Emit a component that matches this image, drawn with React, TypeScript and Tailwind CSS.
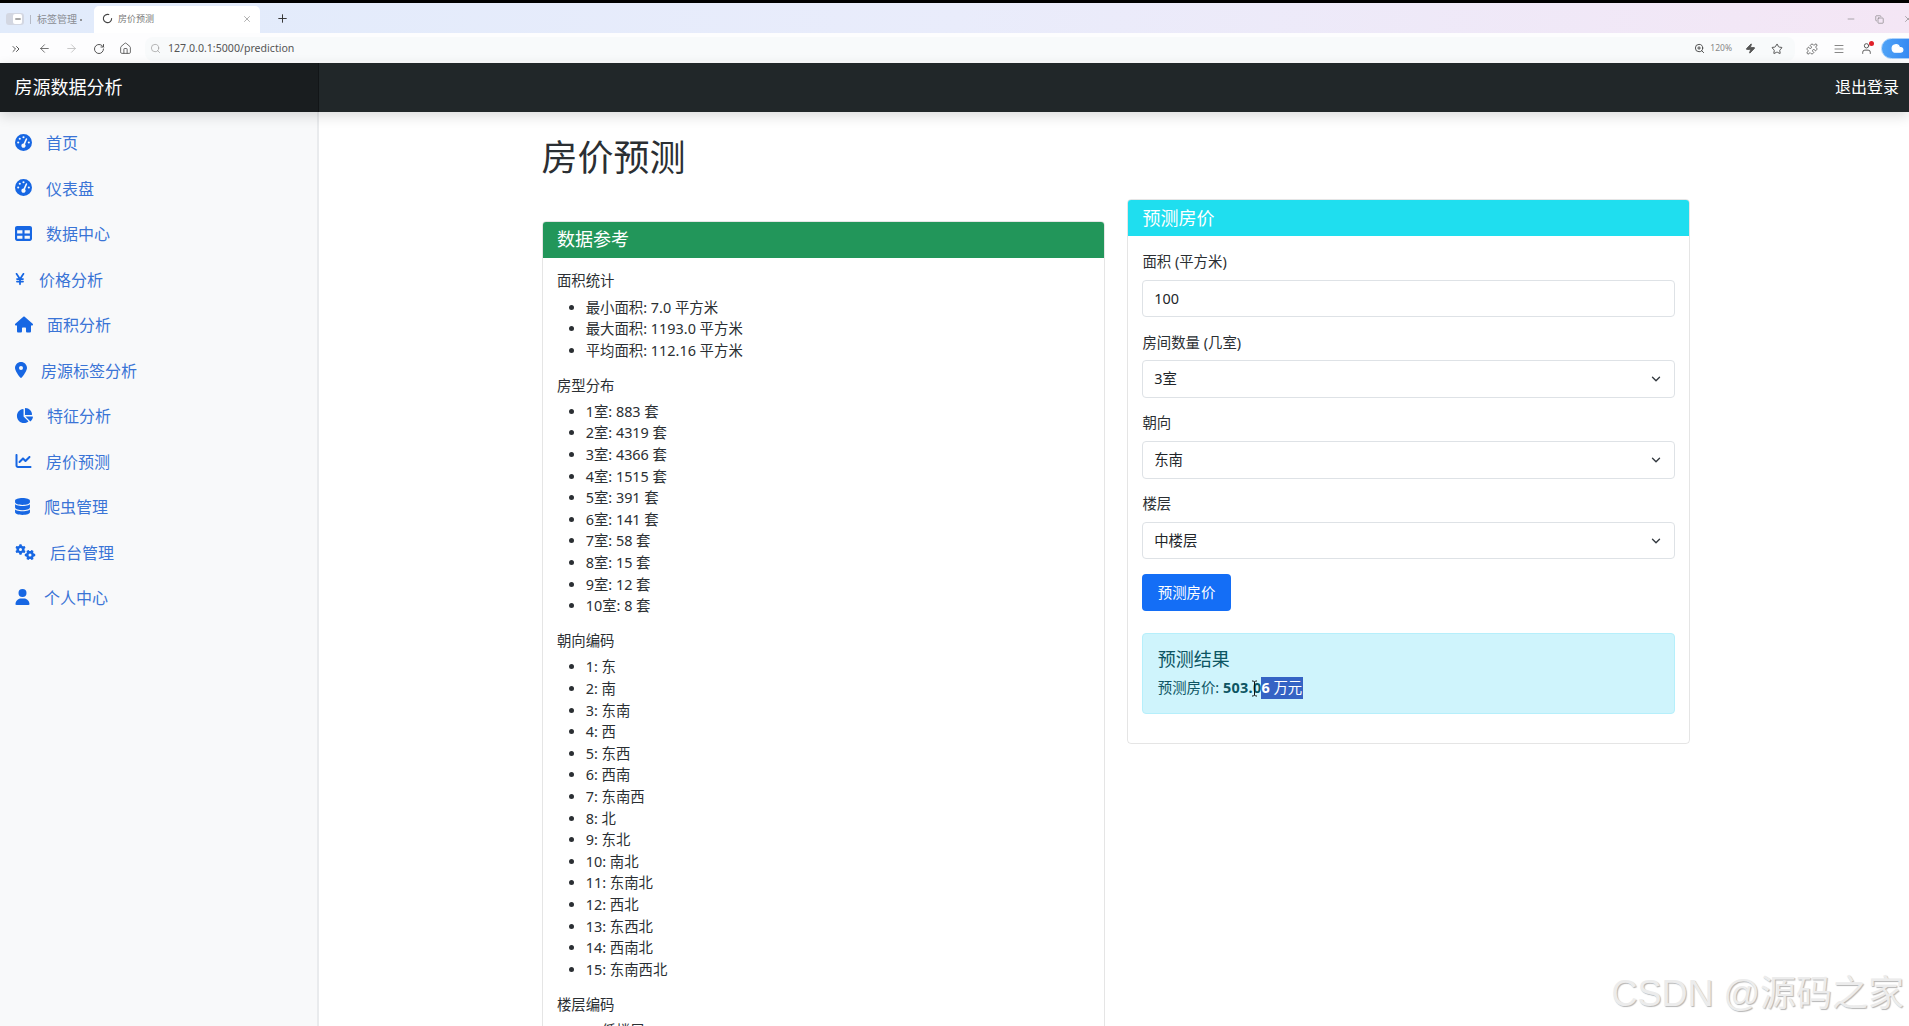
import type { ReactNode } from "react";
import {
  ArrowLeft,
  ArrowRight,
  ChevronDown,
  ChevronsRight,
  Cloud,
  Copy,
  Home,
  LoaderCircle,
  Menu,
  Minus,
  Plus,
  Puzzle,
  RotateCw,
  Search,
  Star,
  User,
  X,
  Zap,
  ZoomIn,
} from "lucide-react";
import {
  FaChartLine,
  FaChartPie,
  FaDatabase,
  FaGaugeHigh,
  FaGears,
  FaHouse,
  FaLocationDot,
  FaTable,
  FaUser,
  FaYenSign,
} from "react-icons/fa6";

const NAV_ITEMS = [
  { label: "首页", icon: <FaGaugeHigh className="h-[17px] w-[17px]" /> },
  { label: "仪表盘", icon: <FaGaugeHigh className="h-[17px] w-[17px]" /> },
  { label: "数据中心", icon: <FaTable className="h-[17px] w-[17px]" /> },
  { label: "价格分析", icon: <FaYenSign className="h-[14px] w-[10px]" /> },
  { label: "面积分析", icon: <FaHouse className="h-[17px] w-[18px]" /> },
  { label: "房源标签分析", icon: <FaLocationDot className="h-4 w-3" /> },
  { label: "特征分析", icon: <FaChartPie className="ml-px h-[17px] w-[17px]" /> },
  { label: "房价预测", icon: <FaChartLine className="h-4 w-[17px]" /> },
  { label: "爬虫管理", icon: <FaDatabase className="h-[17px] w-[15px]" /> },
  { label: "后台管理", icon: <FaGears className="h-4 w-[21px]" /> },
  { label: "个人中心", icon: <FaUser className="h-4 w-[15px]" /> },
];

const REFERENCE_DATA = [
  {
    title: "面积统计",
    items: ["最小面积: 7.0 平方米", "最大面积: 1193.0 平方米", "平均面积: 112.16 平方米"],
  },
  {
    title: "房型分布",
    items: [
      "1室: 883 套",
      "2室: 4319 套",
      "3室: 4366 套",
      "4室: 1515 套",
      "5室: 391 套",
      "6室: 141 套",
      "7室: 58 套",
      "8室: 15 套",
      "9室: 12 套",
      "10室: 8 套",
    ],
  },
  {
    title: "朝向编码",
    items: [
      "1: 东",
      "2: 南",
      "3: 东南",
      "4: 西",
      "5: 东西",
      "6: 西南",
      "7: 东南西",
      "8: 北",
      "9: 东北",
      "10: 南北",
      "11: 东南北",
      "12: 西北",
      "13: 东西北",
      "14: 西南北",
      "15: 东南西北",
    ],
  },
  {
    title: "楼层编码",
    items: ["1: 低楼层", "2: 中楼层", "3: 高楼层"],
  },
];

function Field({ label, children }: { label: string; children: ReactNode }) {
  return (
    <div className="mb-[14.4px]">
      <label className="mb-[7.2px] block leading-[21.6px]">{label}</label>
      {children}
    </div>
  );
}

function SelectField({ label, value, options }: { label: string; value: string; options: string[] }) {
  return (
    <Field label={label}>
      <div className="relative">
        <select
          defaultValue={value}
          className="block h-[37.6px] w-full appearance-none rounded-[4px] border border-[#dee2e6] bg-white px-[10.8px] text-[14.4px] text-[#212529]"
        >
          {options.map((o) => (
            <option key={o}>{o}</option>
          ))}
        </select>
        <ChevronDown
          className="pointer-events-none absolute top-[12px] right-[12px] h-[14px] w-[14px] text-[#343a40]"
          strokeWidth={2.4}
        />
      </div>
    </Field>
  );
}

function BrowserChrome() {
  return (
    <div className="shrink-0">
      <div className="h-[3px] bg-black" />
      <div className="flex h-[30px] items-end bg-gradient-to-r from-[#e1ebfb] via-[#e9ecfb] to-[#f4e6f5] text-[#666]">
        <div className="mb-[8px] ml-[6px] flex h-[12px] w-[18px] shrink-0 items-center justify-end rounded-[3px] bg-[#d3d7e2] pr-[2px]">
          <div className="flex h-[10px] w-[9px] items-center justify-center rounded-[2px] bg-white">
            <Minus className="h-2 w-2 text-[#555]" strokeWidth={3} />
          </div>
        </div>
        <div className="mb-[9px] ml-[6px] h-[9px] w-px shrink-0 bg-[#b5bac6]" />
        <span className="mb-[7px] ml-[6px] w-[40px] shrink-0 text-[10px] leading-[14px] text-[#8a8d93]">标签管理</span>
        <span className="mb-[12px] ml-[3px] h-[2px] w-[2px] shrink-0 rounded-full bg-[#777]" />
        <div className="ml-[12px] flex h-[27px] w-[166px] shrink-0 items-center rounded-t-[5px] bg-white pr-[8px] pb-[2px] pl-[8px]">
          <LoaderCircle className="h-[11px] w-[11px] text-[#444]" strokeWidth={2.4} />
          <span className="ml-[5px] text-[9px] text-[#777]">房价预测</span>
          <X className="ml-auto h-[10px] w-[10px] text-[#888]" strokeWidth={1.6} />
        </div>
        <Plus className="mb-[8px] ml-[16px] h-[13px] w-[13px] text-[#333]" strokeWidth={1.8} />
        <div className="mb-[9px] ml-auto flex items-center text-[#777]">
          <Minus className="mr-[19px] h-[10px] w-[10px]" strokeWidth={1.4} />
          <Copy className="mr-[19px] h-[9px] w-[9px]" strokeWidth={1.6} />
          <X className="mr-[-4px] h-[10px] w-[10px]" strokeWidth={1.4} />
        </div>
      </div>
      <div className="flex h-[29.5px] items-center overflow-hidden bg-[#fdfdfe] pt-[1.5px] text-[#555]">
        <div className="flex w-[31px] shrink-0 justify-center">
          <ChevronsRight className="h-3 w-3" />
        </div>
        <div className="flex w-[27px] shrink-0 justify-center">
          <ArrowLeft className="h-[13px] w-[13px]" strokeWidth={1.5} />
        </div>
        <div className="flex w-[27px] shrink-0 justify-center">
          <ArrowRight className="h-[13px] w-[13px] text-[#bbb]" strokeWidth={1.5} />
        </div>
        <div className="flex w-[27px] shrink-0 justify-center">
          <RotateCw className="h-3 w-3" strokeWidth={2} />
        </div>
        <div className="flex w-[27px] shrink-0 justify-center">
          <Home className="h-[13px] w-[13px]" strokeWidth={1.6} />
        </div>
        <div className="ml-[6px] flex h-[24px] w-[1650px] shrink-0 items-center rounded-[8px] bg-[#f8fafb] pr-[12px] pl-[5px]">
          <Search className="h-[11px] w-[11px] text-[#999]" strokeWidth={1.5} />
          <span className="ml-[7px] text-[10.6px] text-[#555]">127.0.0.1:5000/prediction</span>
          <ZoomIn className="ml-auto h-[11px] w-[11px] text-[#444]" strokeWidth={2} />
          <span className="ml-[5px] text-[8.5px] text-[#888]">120%</span>
          <Zap className="ml-[13px] h-[11px] w-[11px] fill-[#555] text-[#555]" />
          <Star className="ml-[15px] h-[12px] w-[12px] text-[#444]" strokeWidth={1.8} />
        </div>
        <Puzzle className="ml-[11px] h-[12px] w-[12px] shrink-0" strokeWidth={1.6} />
        <Menu className="ml-[15px] h-[12px] w-[12px] shrink-0" strokeWidth={1.4} />
        <div className="relative ml-[15px] shrink-0">
          <User className="h-[13px] w-[13px]" strokeWidth={1.8} />
          <span className="absolute -top-px -right-px h-[5px] w-[5px] rounded-full bg-[#e0202a]" />
        </div>
        <div className="ml-[8px] flex h-[21px] w-[40px] shrink-0 items-center rounded-l-full border border-[#a9d1fb] bg-gradient-to-r from-[#4fa3f7] to-[#2d7ff0] pl-[9px]">
          <Cloud className="h-[13px] w-[13px] fill-white text-white" />
        </div>
      </div>
    </div>
  );
}

export default function App() {
  return (
    <div className="relative flex h-[1026px] flex-col overflow-hidden bg-white [font-family:'Noto_Sans','Noto_Sans_CJK_SC',sans-serif] text-[14.4px] text-[#2b2f33]">
      <BrowserChrome />

      {/* Navbar */}
      <div className="relative z-10 flex h-[49.5px] shrink-0 items-center bg-[#212729] shadow-[0_4px_12px_rgba(0,0,0,0.14)]">
        <div className="flex h-full w-[319px] items-center bg-[#191d1f] pl-[14.4px] text-[18px] text-white shadow-[inset_-1px_0_0_rgba(0,0,0,0.25)]">
          房源数据分析
        </div>
        <span className="ml-auto pr-[10px] text-[16px] text-white">退出登录</span>
      </div>

      <div className="flex min-h-0 flex-1">
        {/* Sidebar */}
        <div className="w-[319px] shrink-0 border-r-2 border-[#e9ebed] bg-[#f8f9fa] pt-[8.4px]">
          {NAV_ITEMS.map((item) => (
            <a key={item.label} className="flex h-[45.5px] items-center gap-[14px] pl-[15px] text-[16px] text-[#3a74d6]">
              <span className="-mt-[2px] flex text-[#1767e3]">{item.icon}</span>
              {item.label}
            </a>
          ))}
        </div>

        {/* Main */}
        <main className="ml-[222.5px] w-[1148.5px] shrink-0 pt-[24.2px]">
          <h1 className="mb-[20px] text-[36px] leading-[43.2px] font-normal">房价预测</h1>
          <div className="flex items-start gap-[22.5px]">
            <div className="mt-[21.6px] w-[563px] shrink-0 rounded-[4px] border border-black/10">
              <div className="rounded-t-[3px] bg-[#22965a] px-[14.4px] py-[7.2px] text-[18px] leading-[21.6px] text-white">
                数据参考
              </div>
              <div className="p-[14.4px]">
                {REFERENCE_DATA.map((group) => (
                  <div key={group.title}>
                    <h6 className="mb-[6.2px] text-[14.4px] leading-[18px] font-normal">{group.title}</h6>
                    <ul className="mb-[15.4px] list-disc pl-[28.8px] leading-[21.6px]">
                      {group.items.map((item) => (
                        <li key={item}>{item}</li>
                      ))}
                    </ul>
                  </div>
                ))}
              </div>
            </div>

            <div className="w-[563px] shrink-0 rounded-[4px] border border-black/10">
              <div className="rounded-t-[3px] bg-[#1fdeef] px-[14.4px] py-[7.2px] text-[18px] leading-[21.6px] text-white">
                预测房价
              </div>
              <div className="p-[14.4px]">
                <Field label="面积 (平方米)">
                  <input
                    defaultValue="100"
                    className="block h-[37.6px] w-full rounded-[4px] border border-[#dee2e6] bg-white px-[10.8px] text-[14.4px] text-[#212529]"
                  />
                </Field>
                <SelectField label="房间数量 (几室)" value="3室" options={["1室", "2室", "3室", "4室", "5室"]} />
                <SelectField label="朝向" value="东南" options={["东", "南", "东南", "西", "北"]} />
                <SelectField label="楼层" value="中楼层" options={["低楼层", "中楼层", "高楼层"]} />
                <button className="h-[37.6px] w-[88.4px] rounded-[4px] bg-[#146ef6] text-[14.4px] text-white">
                  预测房价
                </button>
                <div className="mt-[21.6px] mb-[14.4px] rounded-[4px] border border-[#b6effb] bg-[#cff4fc] p-[14.4px] text-[#0d5563]">
                  <h4 className="mb-[5.8px] text-[18px] leading-[23px] font-normal">预测结果</h4>
                  <p className="relative leading-[21.6px]">
                    预测房价: <strong className="font-bold tracking-[0.3px]">503.0</strong>
                    <span className="inline-block w-[41.5px] bg-[#3563c4] text-white">
                      <strong className="font-bold">6</strong> 万元
                    </span>
                    <svg
                      className="absolute top-[3px] left-[93px] h-[17px] w-[7px]"
                      viewBox="0 0 7 17"
                      fill="none"
                      stroke="#111"
                      strokeWidth="1"
                    >
                      <path d="M1 1h1.5L3.5 2l1-1H6M3.5 2v13M1 16h1.5l1-1 1 1H6" />
                    </svg>
                  </p>
                </div>
              </div>
            </div>
          </div>
        </main>
      </div>

      {/* Watermark */}
      <div className="absolute right-[5px] bottom-[7px] [font-family:'Liberation_Sans','Noto_Sans_CJK_SC',sans-serif] text-[36px] leading-[50px] text-[#ececec] [text-shadow:1px_1px_1px_#b5b5b5]">
        CSDN @源码之家
      </div>
    </div>
  );
}
